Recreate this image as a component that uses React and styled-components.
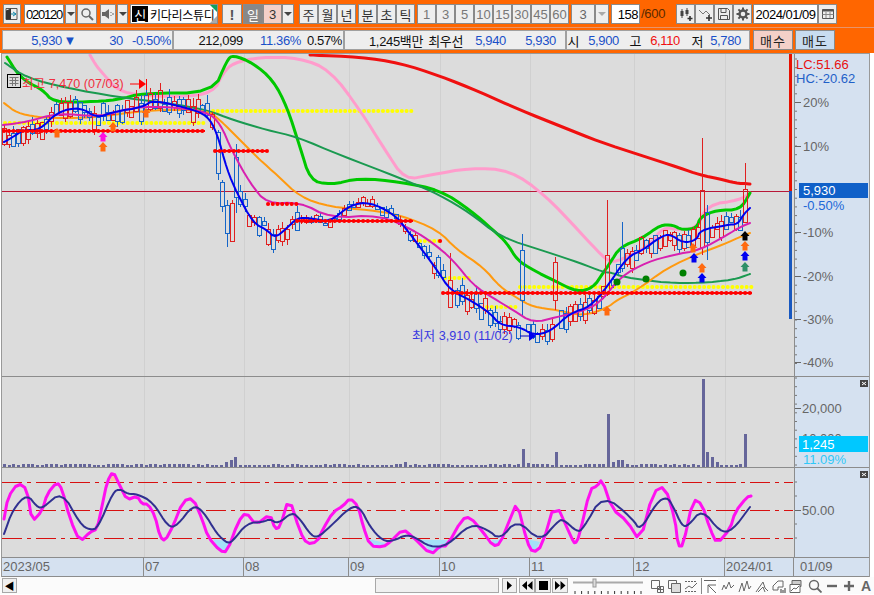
import React from "react";
import styled, { createGlobalStyle } from "styled-components";

const GlobalStyle = createGlobalStyle`
  html, body { margin: 0; padding: 0; background: #fff; overflow: hidden; }
  * { box-sizing: border-box; }
`;

// chart traces, in page pixels
const bluePts = [[4,142],[13,137],[23,130],[40,130],[57,112],[80,107],[97,118],[113,112],[143,107],[153,100],[187,108],[207,115],[217,133],[227,170],[237,193],[253,223],[267,230],[275,238],[287,228],[297,218],[310,218],[330,222],[350,205],[370,202],[395,215],[407,230],[420,247],[437,270],[450,290],[470,300],[490,313],[500,325],[520,327],[533,335],[550,332],[570,313],[590,307],[607,287],[627,257],[643,250],[660,237],[670,234],[683,243],[697,240],[700,230],[727,225],[738,224],[743,215],[750,208]];
const redPts = [[310,55],[360,57],[400,63],[440,76],[480,92],[520,110],[560,126],[600,142],[640,155],[680,168],[700,175],[720,179],[735,183],[750,184]];
const pinkPts = [[90,55],[97,67],[107,78],[115,88],[133,95],[180,97],[213,93],[223,73],[233,63],[260,57],[300,58],[330,70],[360,110],[385,150],[405,180],[430,175],[470,168],[510,170],[545,195],[580,232],[603,257],[613,263],[633,254],[650,245],[663,227],[680,230],[697,228],[707,205],[740,200],[750,193]];
const limePts = [[7,57],[17,73],[27,82],[43,90],[53,102],[87,102],[117,100],[143,93],[213,93],[227,60],[233,55],[253,63],[273,80],[287,107],[300,147],[310,180],[330,185],[360,178],[400,182],[440,190],[470,210],[493,230],[507,243],[517,260],[533,270],[553,280],[577,292],[593,288],[603,273],[610,263],[620,247],[643,238],[660,225],[673,225],[682,230],[697,228],[700,217],[717,210],[740,210],[750,193]];
const seaPts = [[5,63],[27,78],[67,88],[117,97],[167,103],[207,110],[233,120],[267,130],[297,137],[340,155],[400,178],[440,195],[470,213],[500,237],[547,252],[580,263],[603,272],[613,273],[623,277],[667,283],[700,283],[733,280],[750,274]];
const orangePts = [[4,103],[17,113],[37,117],[53,118],[83,118],[113,115],[150,110],[207,110],[220,120],[240,140],[260,160],[277,175],[300,197],[330,207],[370,210],[400,215],[438,230],[457,250],[483,267],[500,287],[517,298],[533,307],[557,310],[583,316],[607,308],[617,300],[637,290],[667,268],[700,253],[717,247],[740,237],[750,233]];
const purplePts = [[3,125],[27,122],[57,113],[100,117],[133,107],[173,107],[207,112],[220,123],[233,153],[250,183],[267,204],[300,202],[330,218],[380,215],[413,230],[433,243],[453,260],[473,285],[493,298],[513,310],[533,323],[557,317],[580,312],[600,303],[620,277],[647,262],[673,255],[700,250],[727,235],[740,227],[750,223]];
const stochFast = [[4,520],[8,498],[18,484],[27,490],[32,523],[42,512],[47,495],[57,483],[62,490],[70,520],[80,543],[90,533],[97,530],[102,507],[107,483],[113,472],[120,487],[127,501],[137,497],[142,505],[148,505],[155,517],[160,538],[165,542],[173,527],[183,502],[193,499],[202,520],[208,538],[220,552],[227,553],[238,523],[246,513],[256,526],[270,515],[275,530],[280,528],[289,498],[300,533],[307,545],[317,543],[323,530],[333,513],[343,507],[350,499],[358,507],[363,527],[370,547],[383,548],[390,543],[403,530],[413,538],[431,556],[440,547],[447,547],[462,520],[470,518],[483,533],[493,547],[500,545],[510,520],[517,503],[527,543],[533,554],[542,547],[555,502],[572,540],[575,545],[579,538],[590,490],[597,487],[602,480],[612,510],[627,522],[640,543],[653,493],[665,487],[675,520],[678,547],[683,547],[693,500],[702,505],[710,530],[717,545],[730,530],[735,513],[747,498],[751,497]];
const stochSlow = [[4,535],[13,510],[27,495],[37,508],[43,509],[62,492],[80,525],[90,531],[98,529],[113,493],[120,490],[128,495],[137,495],[153,503],[168,528],[177,527],[193,506],[203,512],[217,535],[227,544],[232,543],[247,524],[263,523],[270,520],[278,525],[292,513],[300,520],[310,535],[317,539],[330,528],[350,508],[360,508],[370,528],[383,542],[393,542],[405,536],[415,538],[430,548],[447,547],[470,525],[487,530],[500,541],[517,520],[540,543],[557,523],[563,520],[577,533],[583,530],[603,495],[633,520],[640,532],[657,503],[667,498],[673,507],[682,527],[688,527],[702,510],[720,533],[732,532],[750,508]];

// corner cutting, so the hand-read points read as a moving average
const smooth = (list, rounds = 2) => {
  let out = list;
  for (let r = 0; r < rounds; r++) {
    const next = [out[0]];
    for (let i = 0; i < out.length - 1; i++) {
      const [x0, y0] = out[i];
      const [x1, y1] = out[i + 1];
      next.push([x0 * 0.75 + x1 * 0.25, y0 * 0.75 + y1 * 0.25]);
      next.push([x0 * 0.25 + x1 * 0.75, y0 * 0.25 + y1 * 0.75]);
    }
    next.push(out[out.length - 1]);
    out = next;
  }
  return out;
};

const toPoints = (list, rounds) => smooth(list, rounds).map((p) => p.map((v) => v.toFixed(1)).join(",")).join(" ");
const STEP = 4.72;
const gridXs = [144, 244, 349, 440, 530, 634, 725];

const interp = (list, x) => {
  for (let i = 1; i < list.length; i++) {
    if (x <= list[i][0]) {
      const [x0, y0] = list[i - 1];
      const [x1, y1] = list[i];
      return y0 + ((y1 - y0) * (x - x0)) / (x1 - x0);
    }
  }
  return list[list.length - 1][1];
};

let seed = 7;
const rnd = () => {
  seed = (seed * 16807) % 2147483647;
  return seed / 2147483647;
};

// [x, bodyTop, bodyBottom, high, low, colour]
const UP = "#e02020";
const DOWN = "#1565c8";
const bigCandles = {
  218: [132, 173, 130, 180, DOWN],
  222: [182, 206, 180, 212, DOWN],
  227: [205, 233, 200, 247, DOWN],
  232: [203, 241, 200, 241, UP],
  236: [157, 197, 144, 213, DOWN],
  450: [280, 307, 253, 307, UP],
  522: [250, 300, 234, 317, DOWN],
  555: [262, 300, 257, 310, UP],
  607: [255, 293, 200, 296, UP],
  622: [248, 268, 222, 272, DOWN],
  702: [190, 247, 138, 255, UP],
  707: [212, 242, 205, 260, DOWN],
  745: [189, 222, 163, 223, UP],
  750: [186, 194, 178, 203, UP],
};

const candles = Array.from({ length: 158 }, (_, i) => {
  const x = Math.round(4 + i * STEP);
  const big = Object.keys(bigCandles).find((k) => Math.abs(k - x) < 2.4);
  if (big) {
    const [top, bottom, high, low, color] = bigCandles[big];
    return { x: +big, top, bottom, high, low, color };
  }
  const quiet = x > 300 && x < 420;
  const mid = interp(bluePts, x) + (rnd() - 0.5) * (quiet ? 6 : 12);
  const half = quiet ? 1 + rnd() * 3 : 2 + rnd() * 7;
  return {
    x,
    top: Math.round(mid - half),
    bottom: Math.round(mid + half),
    high: Math.round(mid - half - rnd() * (quiet ? 4 : 8)),
    low: Math.round(mid + half + rnd() * (quiet ? 3 : 6)),
    color: rnd() > 0.5 ? UP : DOWN,
  };
});

const bigVolume = { 702: 379, 707: 452, 711: 457, 716: 462, 607: 414, 522: 449, 745: 434, 750: 462, 555: 452, 235: 457, 230: 460, 225: 462, 620: 460, 612: 462, 405: 462, 530: 463 };
const volumes = Array.from({ length: 158 }, (_, i) => {
  const x = Math.round(4 + i * STEP);
  const big = Object.keys(bigVolume).find((k) => Math.abs(k - x) < 2.4);
  return { x, top: big ? bigVolume[big] : 465 - Math.round(rnd()) };
});

const Page = styled.div`
  width: 874px;
  height: 595px;
  background: #fff;
  display: flex;
  flex-direction: column;
  font-family: "Liberation Sans", "Noto Sans CJK KR", sans-serif;
  font-size: 13px;
  color: #111;
`;

const TopBand = styled.div`
  height: 53px;
  background: #ff6600;
`;

const Toolbar = styled.div`
  height: 28px;
  display: flex;
  align-items: flex-start;
  padding: 4px 0 0 3px;
  border-bottom: 1px solid #e8946a;
`;

const Btn = styled.div`
  width: ${(p) => p.$w}px;
  height: 20px;
  margin-left: ${(p) => p.$ml || 0}px;
  display: flex;
  align-items: center;
  justify-content: center;
  border: 1px solid #8a8a8a;
  background: ${(p) => p.$bg || "#eeeeee"};
  color: ${(p) => p.$color || "#333"};
  font-size: ${(p) => p.$size || 13}px;
  white-space: nowrap;
  flex: none;
`;

const Field = styled(Btn)`
  background: #fff;
  color: #000;
  font-size: 13px;
  letter-spacing: ${(p) => p.$track || -0.5}px;
  justify-content: ${(p) => p.$align || "center"};
  padding: 0 1px;
`;

const Caret = styled.span`
  width: 0;
  height: 0;
  border-left: 4px solid transparent;
  border-right: 4px solid transparent;
  border-top: 4px solid ${(p) => p.$color || "#444"};
`;

const NameBox = styled(Btn)`
  position: relative;
  background: #fff;
  justify-content: flex-start;
  overflow: hidden;
  padding: 1px;
  color: #000;
  font-size: 12px;
  letter-spacing: -0.3px;
  &::before {
    content: "";
    position: absolute;
    right: 0;
    top: 0;
    border-top: 7px solid #10a060;
    border-left: 7px solid transparent;
  }
  &::after {
    content: "";
    position: absolute;
    right: 0;
    bottom: 0;
    border-bottom: 7px solid #aaa;
    border-left: 7px solid transparent;
  }
`;

const StockTag = styled.span`
  width: 16px;
  height: 16px;
  flex: none;
  background: #000;
  color: #fff;
  font-size: 13px;
  display: flex;
  align-items: center;
  justify-content: center;
  margin-right: 2px;
`;

const LimitText = styled.span`
  margin-left: 1px;
  width: 28px;
  line-height: 20px;
  color: #5a2a00;
  font-size: 13px;
  letter-spacing: -0.3px;
  flex: none;
`;

const InfoBar = styled.div`
  height: 24px;
  display: flex;
  align-items: flex-start;
  padding: 2px 0 0 2px;
`;

const InfoGroup = styled.div`
  height: 20px;
  width: ${(p) => p.$w}px;
  margin-left: ${(p) => p.$ml || 0}px;
  display: flex;
  align-items: center;
  background: #eeeeee;
  border: 1px solid #a0a0a0;
  flex: none;
  overflow: hidden;
`;

const Cell = styled.span`
  width: ${(p) => p.$w}px;
  flex: none;
  text-align: right;
  white-space: nowrap;
  color: ${(p) => p.$color || "#111"};
  font-size: 13px;
  letter-spacing: -0.35px;
`;

const TradeBtn = styled(Btn)`
  font-size: 13px;
  letter-spacing: 1px;
  color: #222;
`;

const Frame = styled.div`
  width: 869px;
  margin-left: 1px;
  border: 1px solid #999;
  border-bottom: none;
`;

const Pane = styled.div`
  display: grid;
  grid-template-columns: 792px 75px;
  height: ${(p) => p.$h}px;
  border-bottom: 1px solid #8c8c8c;
  background: #dcdcdc;
`;

const Plot = styled.svg`
  display: block;
  width: 792px;
  height: 100%;
  font-family: "Liberation Sans", "Noto Sans CJK KR", sans-serif;
`;

const Axis = styled.svg`
  display: block;
  width: 75px;
  height: 100%;
  background: #d5e1f0;
  border-left: 1px solid #8c8c8c;
  font-family: "Liberation Sans", sans-serif;
  font-size: 13px;
`;

const Trace = styled.polyline`
  fill: none;
  stroke: ${(p) => p.$color};
  stroke-width: ${(p) => p.$w};
  stroke-linejoin: round;
  stroke-linecap: round;
`;

const DateRow = styled.div`
  display: flex;
  height: 19px;
  background: #d5e1f0;
  border-bottom: 1px solid #8c8c8c;
`;

const DateCell = styled.div`
  width: ${(p) => p.$w}px;
  flex: none;
  padding-left: 1px;
  line-height: 18px;
  font-size: 13px;
  color: #666;
  border-right: 1px solid #8c8c8c;
`;

const DateEnd = styled(DateCell)`
  border-right: none;
  padding-left: 6px;
`;

const BottomBar = styled.div`
  height: 17px;
  display: flex;
  align-items: flex-start;
  padding: 1px 0 0 2px;
  background: #fbfbfb;
`;

const BarBtn = styled(Btn)`
  height: 15px;
  background: ${(p) => p.$bg || "#f0f0f0"};
  border-color: #a8a8a8;
  color: #000;
`;

const PlainIcon = styled.div`
  width: ${(p) => p.$w}px;
  height: 16px;
  margin-left: ${(p) => p.$ml || 0}px;
  flex: none;
  display: flex;
  align-items: center;
  justify-content: center;
  color: #666;
  background: ${(p) => (p.$active ? "#fff" : "transparent")};
  border-left: ${(p) => (p.$active ? "1px solid #888" : "none")};
  font-weight: ${(p) => (p.$bold ? 700 : 400)};
  font-size: 14px;
`;

const CloseMark = () => (
  <g>
    <rect x="859" y="3" width="8" height="7" fill="#444" />
    <path d="M861 5 L865 8 M865 5 L861 8" stroke="#fff" strokeWidth="1" />
  </g>
);

const Marker = ({ x, y, color }) => (
  <path
    d={`M${x} ${y - 5} L${x + 4.5} ${y} L${x + 2.5} ${y} L${x + 2.5} ${y + 4.5} L${x - 2.5} ${y + 4.5} L${x - 2.5} ${y} L${x - 4.5} ${y} Z`}
    fill={color}
  />
);

const DotRow = ({ x1, x2, y, color, w = 4 }) => (
  <line x1={x1} x2={x2} y1={y} y2={y} stroke={color} strokeWidth={w} strokeLinecap="round" strokeDasharray={`0.1 ${STEP - 0.1}`} />
);

const Candle = ({ c }) => (
  <g stroke={c.color} fill="none" shapeRendering="crispEdges">
    <line x1={c.x + 0.5} x2={c.x + 0.5} y1={c.high} y2={c.top} />
    <line x1={c.x + 0.5} x2={c.x + 0.5} y1={c.bottom} y2={c.low} />
    <rect x={c.x - 1.5} y={c.top + 0.5} width="4" height={Math.max(1, c.bottom - c.top)} />
  </g>
);

const GridLines = ({ y1, y2 }) =>
  gridXs.map((x) => <line key={x} x1={x + 0.5} x2={x + 0.5} y1={y1} y2={y2} stroke="#d0d0d0" />);

const MainPlot = () => (
  <Plot viewBox="2 54 792 322">
    <GridLines y1={54} y2={376} />
    <line x1="2" x2="789" y1="191.5" y2="191.5" stroke="#b81838" />

    <DotRow x1={5} x2={205} y={123} color="#ffff00" />
    <DotRow x1={213} x2={413} y={111} color="#ffff00" />
    <DotRow x1={420} x2={440} y={241} color="#ffff00" />
    <DotRow x1={445} x2={470} y={278} color="#ffff00" />
    <DotRow x1={487} x2={518} y={307} color="#ffff00" />
    <DotRow x1={520} x2={752} y={287} color="#ffff00" />

    <Trace points={toPoints(pinkPts)} $color="#ff9ccc" $w={3} />
    <Trace points={toPoints(redPts)} $color="#f01010" $w={3} />
    <Trace points={toPoints(limePts)} $color="#00c800" $w={3} />
    <Trace points={toPoints(seaPts)} $color="#1a9a50" $w={2} />
    <Trace points={toPoints(orangePts)} $color="#ff9a10" $w={2} />

    {candles.map((c) => (
      <Candle key={c.x} c={c} />
    ))}

    <Trace points={toPoints(purplePts)} $color="#d820b0" $w={2} />
    <Trace points={toPoints(bluePts)} $color="#0000f0" $w={2} />

    <line x1="2" x2="205" y1="131" y2="131" stroke="#ff0000" strokeWidth="2" />
    <DotRow x1={4} x2={205} y={131} color="#ff0000" />
    <line x1="215" x2="267" y1="151" y2="151" stroke="#ff0000" strokeWidth="2" />
    <DotRow x1={215} x2={267} y={151} color="#ff0000" />
    <DotRow x1={268} x2={298} y={204} color="#ff0000" />
    <line x1="297" x2="413" y1="221" y2="221" stroke="#ff0000" strokeWidth="2" />
    <DotRow x1={297} x2={413} y={221} color="#ff0000" />
    <DotRow x1={440} x2={443} y={241} color="#ff0000" />
    <line x1="443" x2="752" y1="293" y2="293" stroke="#ff0000" strokeWidth="2" />
    <DotRow x1={443} x2={752} y={293} color="#ff0000" />

    <Marker x={57} y={133} color="#ff6a10" />
    <Marker x={103} y={147} color="#ff6a10" />
    <Marker x={103} y={137} color="#ff10e0" />
    <Marker x={113} y={127} color="#ff6a10" />
    <Marker x={146} y={113} color="#ff6a10" />
    <Marker x={607} y={311} color="#ff6a10" />
    <Marker x={693} y={248} color="#ff6a10" />
    <Marker x={694} y={258} color="#0000f0" />
    <Marker x={702} y={268} color="#ff6a10" />
    <Marker x={702} y={278} color="#0000f0" />
    <Marker x={745} y={236} color="#000" />
    <Marker x={745} y={246} color="#ff6a10" />
    <Marker x={745} y={256} color="#0000f0" />
    <Marker x={745} y={267} color="#2e9068" />
    <circle cx="617" cy="282" r="3.5" fill="#008000" />
    <circle cx="646" cy="279" r="3.5" fill="#008000" />
    <circle cx="683" cy="273" r="3.5" fill="#008000" />

    <g>
      <rect x="7.5" y="74.5" width="13" height="13" fill="#dcdcdc" stroke="#000" />
      <path d="M9.5 77.5h9M9.5 80.5h9M9.5 83.5h9M12.5 77v9M15.5 77v9" stroke="#777" fill="none" />
    </g>
    <text x="22" y="88" fontSize="12.6" fill="#f03040">최고 7,470 (07/03)</text>
    <path d="M130 84 H141" stroke="#ff0000" />
    <path d="M139 79 L146 84 L139 89 Z" fill="#ff0000" />
    <line x1="146.5" x2="146.5" y1="79" y2="90" stroke="#ff0000" />
    <text x="412" y="340" fontSize="12.6" fill="#3838e0">최저 3,910 (11/02)</text>
    <path d="M520 336 H530" stroke="#0000c0" />
    <path d="M529 331 L536 336 L529 341 Z" fill="#0000f0" />

    <rect x="789" y="54" width="3" height="137" fill="#e81000" />
    <rect x="789" y="191" width="3" height="128" fill="#1858c0" />
  </Plot>
);

const mainTicks = [[102, "20%"], [146, "10%"], [232, "-10%"], [276, "-20%"], [319, "-30%"], [362, "-40%"]];

const MainAxis = () => (
  <Axis viewBox="794 54 74 322">
    {Array.from({ length: 36 }, (_, i) => 59 + i * 8.7).map((y) => (
      <line key={y} x1="794" x2="796" y1={y} y2={y} stroke="#777" />
    ))}
    {mainTicks.map(([y, label]) => (
      <g key={label}>
        <line x1="794" x2="800" y1={y + 0.5} y2={y + 0.5} stroke="#666" />
        <text x="802" y={y + 5} fill="#666">{label}</text>
      </g>
    ))}
    <text x="795" y="69" fill="#e81010">LC:51.66</text>
    <text x="795" y="83" fill="#1f60c8">HC:-20.62</text>
    <rect x="798" y="183" width="69" height="15" fill="#1060c8" />
    <text x="802" y="195" fill="#fff">5,930</text>
    <text x="802" y="210" fill="#2068d8">-0.50%</text>
  </Axis>
);

const VolumePlot = () => (
  <Plot viewBox="2 377 792 90">
    <GridLines y1={377} y2={467} />
    {volumes.map((v) => (
      <rect key={v.x} x={v.x - 1} y={v.top} width="3" height={467 - v.top} fill="#66669a" />
    ))}
  </Plot>
);

const VolumeAxis = () => (
  <Axis viewBox="794 377 74 90">
    {Array.from({ length: 11 }, (_, i) => 378 + i * 8.7).map((y) => (
      <line key={y} x1="794" x2="796" y1={y} y2={y} stroke="#777" />
    ))}
    <line x1="794" x2="800" y1="408.5" y2="408.5" stroke="#666" />
    <text x="801" y="413" fill="#666">20,000</text>
    <text x="801" y="443" fill="#666">10,000</text>
    <g transform="translate(0 377)">
      <CloseMark />
    </g>
    <rect x="798" y="436" width="69" height="16" fill="#00c8ff" />
    <text x="801" y="449" fill="#fff">1,245</text>
    <text x="802" y="464" fill="#30c8f8">11.09%</text>
  </Axis>
);

const fills = [
  "213,540 232,543 226,552 219,551",
  "369,540 385,544 383,548 371,547",
  "421,541 447,541 446,547 432,555",
  "492,541 500,541 498,546 494,547",
  "527,540 540,543 534,553 528,546",
];

const StochPlot = () => (
  <Plot viewBox="2 469 792 89">
    <GridLines y1={469} y2={558} />
    {[483, 511, 539].map((y) => (
      <line key={y} x1="2" x2="793" y1={y + 0.5} y2={y + 0.5} stroke="#d81010" strokeWidth="1" strokeDasharray="20 5 4 5" />
    ))}
    {fills.map((f) => (
      <polygon key={f} points={f} fill="#a4e0f8" />
    ))}
    <polygon points="110,482 116,482 113,473" fill="#f8c0a0" />
    <Trace points={toPoints(stochFast, 1)} $color="#ff10f0" $w={3} />
    <Trace points={toPoints(stochSlow, 2)} $color="#303090" $w={2} />
  </Plot>
);

const StochAxis = () => (
  <Axis viewBox="794 469 74 89">
    {[483, 497, 525, 539].map((y) => (
      <line key={y} x1="794" x2="796" y1={y} y2={y} stroke="#777" />
    ))}
    <line x1="794" x2="800" y1="511.5" y2="511.5" stroke="#666" />
    <text x="801" y="516" fill="#666">50.00</text>
    <g transform="translate(0 469)">
      <CloseMark />
    </g>
  </Axis>
);

const dateCells = [
  [142, "2023/05"],
  [100, "07"],
  [105, "08"],
  [91, "09"],
  [90, "10"],
  [104, "11"],
  [91, "12"],
  [69, "2024/01"],
];

const Glyph = ({ w = 14, h = 14, children }) => (
  <svg width={w} height={h} viewBox={`0 0 ${w} ${h}`} fill="none" stroke="currentColor">
    {children}
  </svg>
);

export default function App() {
  return (
    <Page>
      <GlobalStyle />
      <TopBand>
        <Toolbar>
          <Btn $w={18}>
            <Glyph>
              <path d="M1 1.5h11v11H1z" stroke="#555" />
              <path d="M1 3.5 L6 1.5 V12.5 L1 12.5Z" fill="#333" stroke="none" />
              <path d="M6 7h5M8 5l3 2-3 2" stroke="#18a" />
            </Glyph>
          </Btn>
          <Field $w={40} $ml={3} $track={-1.2}>020120</Field>
          <Btn $w={11} $ml={1}><Caret /></Btn>
          <Btn $w={20} $ml={1}>
            <Glyph>
              <circle cx="6" cy="6" r="4" stroke="#666" strokeWidth="1.5" />
              <path d="M9 9l4 4" stroke="#666" strokeWidth="2" />
            </Glyph>
          </Btn>
          <Btn $w={16} $ml={3}>
            <Glyph>
              <path d="M1 5h3l4-3v10l-4-3H1z" fill="#666" stroke="none" />
              <path d="M10 5v1M10 8v1M12 6v2" stroke="#666" />
            </Glyph>
          </Btn>
          <Btn $w={11} $ml={1}><Caret /></Btn>
          <NameBox $w={88} $ml={2}>
            <StockTag>신</StockTag>
            키다리스튜디
          </NameBox>
          <Btn $w={20} $ml={4} $size={15} $color="#555"><b>!</b></Btn>
          <Btn $w={20} $ml={1} $bg="#888" $color="#fff">일</Btn>
          <Btn $w={19} $bg="#f4d0c8">3</Btn>
          <Btn $w={12}><Caret /></Btn>
          <Btn $w={19} $ml={5}>주</Btn>
          <Btn $w={19}>월</Btn>
          <Btn $w={19}>년</Btn>
          <Btn $w={19} $ml={2}>분</Btn>
          <Btn $w={19}>초</Btn>
          <Btn $w={19}>틱</Btn>
          <Btn $w={19} $ml={2} $color="#777">1</Btn>
          {["3", "5", "10", "15", "30", "45", "60"].map((n) => (
            <Btn key={n} $w={19} $color="#777">{n}</Btn>
          ))}
          <Btn $w={24} $ml={2} $color="#666">3</Btn>
          <Btn $w={14}><Caret $color="#aaa" /></Btn>
          <Field $w={29} $ml={2} $align="flex-end">158</Field>
          <LimitText>/600</LimitText>
          <Btn $w={19} $ml={7}>
            <Glyph>
              <path d="M3 2v9M8 1v8" stroke="#444" />
              <rect x="1.5" y="4" width="3" height="5" fill="#444" stroke="none" />
              <rect x="6.5" y="3" width="3" height="4" fill="#444" stroke="none" />
              <path d="M11 9v5M8.5 11.5h5" stroke="#333" strokeWidth="1.6" />
            </Glyph>
          </Btn>
          <Btn $w={19}>
            <Glyph>
              <path d="M1 3l4 4 3-3 4 4" stroke="#777" />
              <path d="M11 8v6M8 11h6" stroke="#333" strokeWidth="1.6" />
            </Glyph>
          </Btn>
          <Btn $w={19}>
            <Glyph>
              <path d="M1.500 1.500h9l2 2v9h-11z" stroke="#555" />
              <path d="M4 1.500v4h5v-4M3.500 12.500v-4h7v4" stroke="#555" />
            </Glyph>
          </Btn>
          <Btn $w={19}>
            <Glyph>
              <circle cx="7" cy="7" r="3.5" stroke="#555" strokeWidth="2.4" />
              <path d="M7 0.5v2.5M7 11v2.5M0.5 7H3M11 7h2.5M2.4 2.4l1.8 1.8M9.8 9.8l1.8 1.8M2.4 11.6l1.8-1.8M9.8 4.2l1.8-1.8" stroke="#555" strokeWidth="2" />
            </Glyph>
          </Btn>
          <Field $w={65} $ml={1}>2024/01/09</Field>
          <Btn $w={19}>
            <Glyph>
              <path d="M1.500 2.500h11v9h-11z" stroke="#555" />
              <path d="M1.500 3.500h11" stroke="#555" strokeWidth="2" />
              <path d="M1.500 7.500h11M5 5v6M9 5v6" stroke="#888" />
            </Glyph>
          </Btn>
        </Toolbar>
        <InfoBar>
          <InfoGroup $w={171}>
            <Cell $w={59} $color="#1a50c8">5,930</Cell>
            <Cell $w={14} $color="#1a50c8">▼</Cell>
            <Cell $w={47} $color="#1a50c8">30</Cell>
            <Cell $w={48} $color="#1a50c8">-0.50%</Cell>
          </InfoGroup>
          <InfoGroup $w={171}>
            <Cell $w={69}>212,099</Cell>
            <Cell $w={58} $color="#1a50c8">11.36%</Cell>
            <Cell $w={41}>0.57%</Cell>
          </InfoGroup>
          <InfoGroup $w={222}>
            <Cell $w={78}>1,245백만</Cell>
            <Cell $w={40}>최우선</Cell>
            <Cell $w={43} $color="#1a50c8">5,940</Cell>
            <Cell $w={50} $color="#1a50c8">5,930</Cell>
          </InfoGroup>
          <InfoGroup $w={184}>
            <Cell $w={12}>시</Cell>
            <Cell $w={40} $color="#1a50c8">5,900</Cell>
            <Cell $w={22}>고</Cell>
            <Cell $w={39} $color="#f01010">6,110</Cell>
            <Cell $w={23}>저</Cell>
            <Cell $w={38} $color="#1a50c8">5,780</Cell>
          </InfoGroup>
          <TradeBtn $w={40} $ml={3} $bg="#f4d0c8">매수</TradeBtn>
          <TradeBtn $w={40} $ml={2} $bg="#c8dcf0">매도</TradeBtn>
        </InfoBar>
      </TopBand>

      <Frame>
        <Pane $h={323}>
          <MainPlot />
          <MainAxis />
        </Pane>
        <Pane $h={91}>
          <VolumePlot />
          <VolumeAxis />
        </Pane>
        <Pane $h={90}>
          <StochPlot />
          <StochAxis />
        </Pane>
        <DateRow>
          {dateCells.map(([w, label]) => (
            <DateCell key={label} $w={w}>{label}</DateCell>
          ))}
          <DateEnd $w={75}>01/09</DateEnd>
        </DateRow>
      </Frame>

      <BottomBar>
        <BarBtn $w={15} $size={10}>◀</BarBtn>
        <BarBtn $w={124} $ml={358} />
        <BarBtn $w={15} $ml={3}>
          <Glyph w={9} h={9}><path d="M2 0l5 4.5-5 4.5z" fill="#000" stroke="none" /></Glyph>
        </BarBtn>
        <BarBtn $w={16} $ml={2}>
          <Glyph w={11} h={9}><path d="M5 0L0 4.5 5 9zM10.500 0l-5 4.500 5 4.500z" fill="#000" stroke="none" /></Glyph>
        </BarBtn>
        <BarBtn $w={16}>
          <Glyph w={9} h={9}><rect width="9" height="9" fill="#000" stroke="none" /></Glyph>
        </BarBtn>
        <BarBtn $w={16} $ml={1}>
          <Glyph w={11} h={9}><path d="M0 0l5 4.500L0 9zM5.500 0l5 4.500-5 4.500z" fill="#000" stroke="none" /></Glyph>
        </BarBtn>
        <PlainIcon $w={72} $ml={4}>
          <svg width="72" height="16" viewBox="0 0 72 16">
            <path d="M1 4.500h70" stroke="#aaa" strokeWidth="2" />
            <rect x="21" y="1" width="3" height="8" fill="#ddd" stroke="#999" />
            {Array.from({ length: 11 }, (_, i) => (
              <line key={i} x1={3 + i * 6.6} x2={3 + i * 6.6} y1="13" y2="16" stroke="#333" />
            ))}
          </svg>
        </PlainIcon>
        <PlainIcon $w={14} $ml={6}>
          <Glyph><path d="M1.500 1.500h8v8h-8z" /><path d="M7.500 7.500h6v6h-6zM10.500 7.500v6M7.500 10.500h6" /></Glyph>
        </PlainIcon>
        <PlainIcon $w={14} $ml={3}>
          <Glyph><path d="M1.500 1.500h8v8h-8z" /><path d="M4.500 4.500h9v9h-9z" fill="#ddd" /></Glyph>
        </PlainIcon>
        <PlainIcon $w={14} $ml={3}>
          <Glyph><path d="M1 2.500h12M1 12.500h12" strokeDasharray="2 1" /><path d="M1 10l4-3 3 2 5-5" /></Glyph>
        </PlainIcon>
        <PlainIcon $w={17} $ml={3} $active>
          <Glyph><path d="M1 1.500h12M5 14V6h8M5 6l8 8" /></Glyph>
        </PlainIcon>
        <PlainIcon $w={15} $ml={2}>
          <Glyph><path d="M1 11l2-5 2 4 3-7 2 6 3-3" /></Glyph>
        </PlainIcon>
        <PlainIcon $w={14} $ml={3}>
          <Glyph><path d="M1 13l3-9 2 8 3-10 2 8 2-3" /></Glyph>
        </PlainIcon>
        <PlainIcon $w={14} $ml={3}>
          <Glyph><path d="M1 13l7-10 2 6 3 3M3 13l5-5 2 5" /></Glyph>
        </PlainIcon>
        <PlainIcon $w={14} $ml={3}>
          <Glyph><path d="M1 7l5-5h5v6H6v3H1z" /><path d="M9 10v4M11 11v3M13 9v5" stroke="#333" /></Glyph>
        </PlainIcon>
        <PlainIcon $w={14} $ml={3}>
          <Glyph><path d="M3 1.500h9v6h-9z" fill="#ccc" /><path d="M1 5.500h10v8H1z" fill="#fff" /><path d="M2 12l3-3 2 1 3-3" /></Glyph>
        </PlainIcon>
        <PlainIcon $w={14} $ml={5}>
          <Glyph><circle cx="6" cy="6" r="4.500" strokeWidth="1.400" /><path d="M9 9l4.500 4.500" strokeWidth="1.800" /></Glyph>
        </PlainIcon>
        <PlainIcon $w={10} $ml={5}>
          <Glyph w={10} h={10}><path d="M0 5h10" strokeWidth="2.400" /></Glyph>
        </PlainIcon>
        <PlainIcon $w={10} $ml={7}>
          <Glyph w={10} h={10}><path d="M0 5h10M5 0v10" strokeWidth="2.400" /></Glyph>
        </PlainIcon>
        <PlainIcon $w={12} $ml={6} $bold>A</PlainIcon>
      </BottomBar>
    </Page>
  );
}
